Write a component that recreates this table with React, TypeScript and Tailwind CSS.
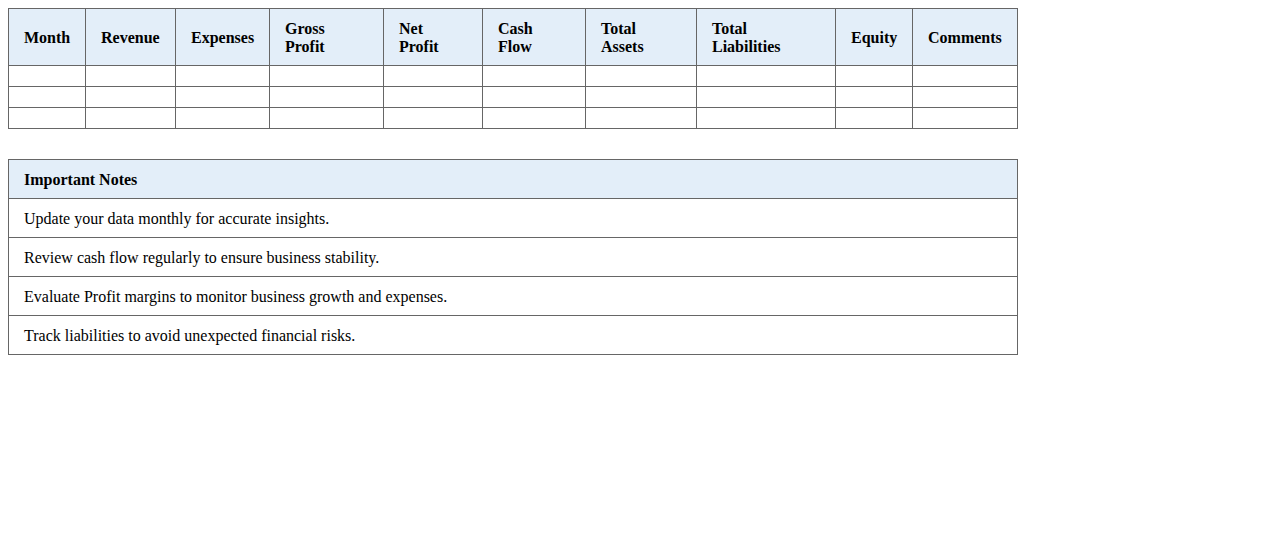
const columns: { label: string[]; width: number }[] = [
  { label: ["Month"], width: 77 },
  { label: ["Revenue"], width: 90 },
  { label: ["Expenses"], width: 94 },
  { label: ["Gross", "Profit"], width: 114 },
  { label: ["Net", "Profit"], width: 99 },
  { label: ["Cash", "Flow"], width: 103 },
  { label: ["Total", "Assets"], width: 111 },
  { label: ["Total", "Liabilities"], width: 139 },
  { label: ["Equity"], width: 77 },
  { label: ["Comments"], width: 105 },
];

const notes = [
  "Update your data monthly for accurate insights.",
  "Review cash flow regularly to ensure business stability.",
  "Evaluate Profit margins to monitor business growth and expenses.",
  "Track liabilities to avoid unexpected financial risks.",
];

export default function App() {
  return (
    <div className="min-h-screen bg-white p-2 font-['Liberation_Serif',serif] text-[16px] leading-[18px] text-black">
      <table className="w-[1010px] table-fixed border-collapse">
        <colgroup>
          {columns.map((c, i) => (
            <col key={i} style={{ width: c.width }} />
          ))}
        </colgroup>
        <thead>
          <tr className="bg-[#e3eef9]">
            {columns.map((c, i) => (
              <th
                key={i}
                className="border border-[#666] px-[15px] pt-[11px] pb-[9px] text-left align-middle font-bold"
              >
                {c.label.map((l, j) => (
                  <div key={j}>{l}</div>
                ))}
              </th>
            ))}
          </tr>
        </thead>
        <tbody>
          {[0, 1, 2].map((r) => (
            <tr key={r}>
              {columns.map((_, i) => (
                <td key={i} className="h-[21px] border border-[#666] p-0" />
              ))}
            </tr>
          ))}
        </tbody>
      </table>

      <table className="mt-[30px] w-[1010px] border-collapse">
        <thead>
          <tr className="bg-[#e3eef9]">
            <th className="border border-[#666] px-[15px] pt-[11px] pb-[9px] text-left font-bold">
              Important Notes
            </th>
          </tr>
        </thead>
        <tbody>
          {notes.map((n) => (
            <tr key={n}>
              <td className="border border-[#666] px-[15px] pt-[11px] pb-[9px]">{n}</td>
            </tr>
          ))}
        </tbody>
      </table>
    </div>
  );
}
